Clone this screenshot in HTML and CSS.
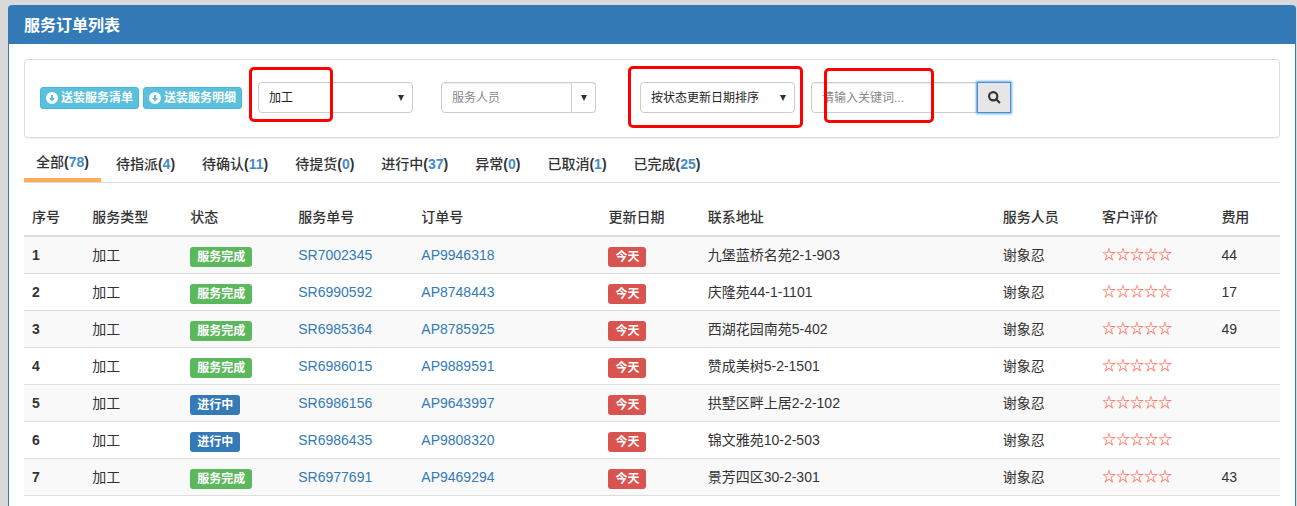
FILE: index.html
```html
<!DOCTYPE html>
<html lang="zh-CN">

<head>
    <meta charset="UTF-8">
    <meta name="viewport" content="width=device-width, initial-scale=1.0">
    <title>服务订单列表</title>
    <link rel="stylesheet" href="styles.css">
</head>

<body>
    <div class="panel">
        <div class="panel-heading">
            <h1>服务订单列表</h1>
        </div>
        <div class="panel-body">
            <form class="toolbar">
                <div class="exports">
                    <button type="button" class="btn-info">
                        <svg class="icon-down" viewBox="0 0 12 12" aria-hidden="true"><path fill-rule="evenodd" d="M6 0a6 6 0 1 0 0 12A6 6 0 0 0 6 0zM5 3h2v3h2L6 9.500 3 6h2z"/></svg>
                        送装服务清单
                    </button>
                    <button type="button" class="btn-info">
                        <svg class="icon-down" viewBox="0 0 12 12" aria-hidden="true"><path fill-rule="evenodd" d="M6 0a6 6 0 1 0 0 12A6 6 0 0 0 6 0zM5 3h2v3h2L6 9.500 3 6h2z"/></svg>
                        送装服务明细
                    </button>
                </div>
                <div class="field field-type">
                    <select class="control" aria-label="服务类型">
                        <option>加工</option>
                    </select>
                    <span class="caret"></span>
                    <span class="mark mark-type"></span>
                </div>
                <div class="field field-staff">
                    <input type="text" class="control" placeholder="服务人员" aria-label="服务人员">
                    <button type="button" class="combo-btn" aria-label="展开"><span class="caret"></span></button>
                </div>
                <div class="field field-sort">
                    <select class="control" aria-label="排序">
                        <option>按状态更新日期排序</option>
                    </select>
                    <span class="caret"></span>
                    <span class="mark mark-sort"></span>
                </div>
                <div class="field field-search">
                    <input type="text" class="control" placeholder="请输入关键词..." aria-label="关键词">
                    <button type="button" class="search-btn" aria-label="搜索">
                        <svg class="icon-search" viewBox="0 0 12 12" aria-hidden="true"><circle cx="4.800" cy="4.800" r="3.800"/><path d="M7.600 7.600l3.400 3.400"/></svg>
                    </button>
                    <span class="mark mark-search"></span>
                </div>
            </form>

            <ul class="tabs">
                <li><a href="#" class="active">全部<b>(<i>78</i>)</b></a></li>
                <li><a href="#">待指派<b>(<i>4</i>)</b></a></li>
                <li><a href="#">待确认<b>(<i>11</i>)</b></a></li>
                <li><a href="#">待提货<b>(<i>0</i>)</b></a></li>
                <li><a href="#">进行中<b>(<i>37</i>)</b></a></li>
                <li><a href="#">异常<b>(<i>0</i>)</b></a></li>
                <li><a href="#">已取消<b>(<i>1</i>)</b></a></li>
                <li><a href="#">已完成<b>(<i>25</i>)</b></a></li>
            </ul>

            <table class="orders">
                <colgroup>
                    <col class="col-no">
                    <col class="col-type">
                    <col class="col-status">
                    <col class="col-service">
                    <col class="col-order">
                    <col class="col-date">
                    <col class="col-address">
                    <col class="col-staff">
                    <col class="col-rating">
                    <col>
                </colgroup>
                <thead>
                    <tr>
                        <th>序号</th>
                        <th>服务类型</th>
                        <th>状态</th>
                        <th>服务单号</th>
                        <th>订单号</th>
                        <th>更新日期</th>
                        <th>联系地址</th>
                        <th>服务人员</th>
                        <th>客户评价</th>
                        <th>费用</th>
                    </tr>
                </thead>
                <tbody>
                    <tr>
                        <td class="no">1</td>
                        <td>加工</td>
                        <td class="tag"><span class="label success">服务完成</span></td>
                        <td><a href="#">SR7002345</a></td>
                        <td><a href="#">AP9946318</a></td>
                        <td class="tag"><span class="label danger">今天</span></td>
                        <td>九堡蓝桥名苑2-1-903</td>
                        <td>谢象忍</td>
                        <td class="stars">☆☆☆☆☆</td>
                        <td>44</td>
                    </tr>
                    <tr>
                        <td class="no">2</td>
                        <td>加工</td>
                        <td class="tag"><span class="label success">服务完成</span></td>
                        <td><a href="#">SR6990592</a></td>
                        <td><a href="#">AP8748443</a></td>
                        <td class="tag"><span class="label danger">今天</span></td>
                        <td>庆隆苑44-1-1101</td>
                        <td>谢象忍</td>
                        <td class="stars">☆☆☆☆☆</td>
                        <td>17</td>
                    </tr>
                    <tr>
                        <td class="no">3</td>
                        <td>加工</td>
                        <td class="tag"><span class="label success">服务完成</span></td>
                        <td><a href="#">SR6985364</a></td>
                        <td><a href="#">AP8785925</a></td>
                        <td class="tag"><span class="label danger">今天</span></td>
                        <td>西湖花园南苑5-402</td>
                        <td>谢象忍</td>
                        <td class="stars">☆☆☆☆☆</td>
                        <td>49</td>
                    </tr>
                    <tr>
                        <td class="no">4</td>
                        <td>加工</td>
                        <td class="tag"><span class="label success">服务完成</span></td>
                        <td><a href="#">SR6986015</a></td>
                        <td><a href="#">AP9889591</a></td>
                        <td class="tag"><span class="label danger">今天</span></td>
                        <td>赞成美树5-2-1501</td>
                        <td>谢象忍</td>
                        <td class="stars">☆☆☆☆☆</td>
                        <td></td>
                    </tr>
                    <tr>
                        <td class="no">5</td>
                        <td>加工</td>
                        <td class="tag"><span class="label primary">进行中</span></td>
                        <td><a href="#">SR6986156</a></td>
                        <td><a href="#">AP9643997</a></td>
                        <td class="tag"><span class="label danger">今天</span></td>
                        <td>拱墅区畔上居2-2-102</td>
                        <td>谢象忍</td>
                        <td class="stars">☆☆☆☆☆</td>
                        <td></td>
                    </tr>
                    <tr>
                        <td class="no">6</td>
                        <td>加工</td>
                        <td class="tag"><span class="label primary">进行中</span></td>
                        <td><a href="#">SR6986435</a></td>
                        <td><a href="#">AP9808320</a></td>
                        <td class="tag"><span class="label danger">今天</span></td>
                        <td>锦文雅苑10-2-503</td>
                        <td>谢象忍</td>
                        <td class="stars">☆☆☆☆☆</td>
                        <td></td>
                    </tr>
                    <tr>
                        <td class="no">7</td>
                        <td>加工</td>
                        <td class="tag"><span class="label success">服务完成</span></td>
                        <td><a href="#">SR6977691</a></td>
                        <td><a href="#">AP9469294</a></td>
                        <td class="tag"><span class="label danger">今天</span></td>
                        <td>景芳四区30-2-301</td>
                        <td>谢象忍</td>
                        <td class="stars">☆☆☆☆☆</td>
                        <td>43</td>
                    </tr>
                </tbody>
            </table>
        </div>
    </div>
</body>

</html>
```
FILE: styles.css
```css
* {
    box-sizing: border-box;
}

body {
    margin: 0;
    padding: 5px 1px 0 8px;
    background-color: #dadada;
    color: #333;
    font-family: "Liberation Sans", "Noto Sans CJK SC", sans-serif;
    font-size: 14px;
    line-height: 20px;
}

a {
    color: #337ab7;
    text-decoration: none;
}

button,
input,
select {
    font-family: inherit;
    margin: 0;
}

.panel {
    min-height: calc(100vh - 5px);
    background-color: #fff;
    border: 1px solid #337ab7;
    border-bottom: 0;
    border-radius: 4px 4px 0 0;
}

.panel-heading {
    padding: 10px 15px 8px;
    background-color: #337ab7;
    color: #fff;
}

.panel-heading h1 {
    margin: 0;
    font-size: 16px;
    font-weight: bold;
    line-height: 20px;
}

.panel-body {
    padding: 15px 15px 8px;
}

/* toolbar */
.toolbar {
    display: flex;
    align-items: center;
    padding: 22px 15px 24px;
    border: 1px solid #ddd;
    border-radius: 4px;
    box-shadow: 0 1px 1px rgba(0, 0, 0, 0.05);
}

.exports {
    display: flex;
    gap: 4px;
}

.btn-info {
    display: flex;
    align-items: center;
    gap: 3px;
    height: 22px;
    padding: 0 5px;
    background-color: #5bc0de;
    border: 1px solid #46b8da;
    border-radius: 3px;
    color: #fff;
    font-size: 12px;
    font-weight: bold;
    line-height: 20px;
    white-space: nowrap;
}

.icon-down {
    width: 12px;
    height: 12px;
    fill: #fff;
}

.field {
    position: relative;
    display: flex;
    width: 155px;
}

.field-type {
    margin-left: 16px;
}

.field-staff {
    margin-left: 28px;
}

.field-sort {
    margin-left: 44px;
}

.field-search {
    width: 200px;
    margin-left: 16px;
}

.control {
    flex: 1;
    min-width: 0;
    height: 31px;
    padding: 0 10px;
    appearance: none;
    background-color: #fff;
    border: 1px solid #ccc;
    border-radius: 4px;
    color: #222;
    font-size: 12px;
}

input.control {
    border-radius: 4px 0 0 4px;
    box-shadow: inset 0 1px 1px rgba(0, 0, 0, 0.075);
}

.control::placeholder {
    color: #888;
}

.caret {
    border-top: 6px solid #333;
    border-left: 3px solid transparent;
    border-right: 3px solid transparent;
}

/* the caret lies over the select */
select + .caret {
    position: absolute;
    top: 13px;
    right: 9px;
    pointer-events: none;
}

.combo-btn {
    display: flex;
    align-items: center;
    justify-content: center;
    width: 24px;
    padding: 0;
    background-color: #fff;
    border: 1px solid #ccc;
    border-left: 0;
    border-radius: 0 4px 4px 0;
}

.search-btn {
    display: flex;
    align-items: center;
    justify-content: center;
    width: 34px;
    padding: 0;
    background-color: #e6e6e6;
    border: 1px solid #4a90d9;
    box-shadow: 0 0 2px 1px #66afe9;
}

.icon-search {
    width: 13px;
    height: 13px;
    fill: none;
    stroke: #333;
    stroke-width: 2;
}

/* red frames over the fields */
.mark {
    position: absolute;
    border: 3px solid #f00;
    border-radius: 5px;
    pointer-events: none;
}

.mark-type {
    top: -15px;
    left: -9px;
    width: 84px;
    height: 55px;
}

.mark-sort {
    top: -16px;
    left: -12px;
    width: 175px;
    height: 62px;
}

.mark-search {
    top: -14px;
    left: 13px;
    width: 110px;
    height: 55px;
}

/* tabs */
.tabs {
    display: flex;
    align-items: flex-end;
    gap: 3px;
    margin: 0 0 16px;
    padding: 14px 0 0;
    border-bottom: 1px solid #ddd;
    list-style: none;
}

.tabs a {
    display: block;
    padding: 0 12px 8px;
    color: #333;
    font-weight: 500;
}

.tabs .active {
    padding-bottom: 6px;
    border-bottom: 4px solid #ffad5c;
}

.tabs i {
    color: #428bca;
    font-style: normal;
}

/* orders */
.orders {
    width: 100%;
    table-layout: fixed;
    border-collapse: separate;
    border-spacing: 0;
}

.orders th,
.orders td {
    padding: 8px;
    border-bottom: 1px solid #ddd;
    text-align: left;
    line-height: 20px;
    white-space: nowrap;
}

.orders th {
    border-bottom-width: 2px;
    font-weight: 500;
}

.orders tbody tr:nth-child(odd) {
    background-color: #f9f9f9;
}

.col-no {
    width: 4.8%;
}

.col-type {
    width: 7.8%;
}

.col-date,
.col-staff {
    width: 7.9%;
}

.col-status {
    width: 8.6%;
}

.col-service {
    width: 9.8%;
}

.col-order {
    width: 14.9%;
}

.col-address {
    width: 23.5%;
}

.col-rating {
    width: 9.5%;
}

.orders .no {
    font-weight: bold;
}

.orders .tag {
    padding: 10px 8px 6px;
}

.label {
    display: inline-block;
    padding: 0 7px;
    border-radius: 3px;
    color: #fff;
    font-size: 12px;
    font-weight: bold;
    line-height: 20px;
    vertical-align: top;
}

.success {
    background-color: #5cb85c;
}

.primary {
    background-color: #337ab7;
}

.danger {
    background-color: #d9534f;
}

.orders .stars {
    padding: 7px 8px 9px;
    color: tomato;
    font-weight: bold;
}
```
